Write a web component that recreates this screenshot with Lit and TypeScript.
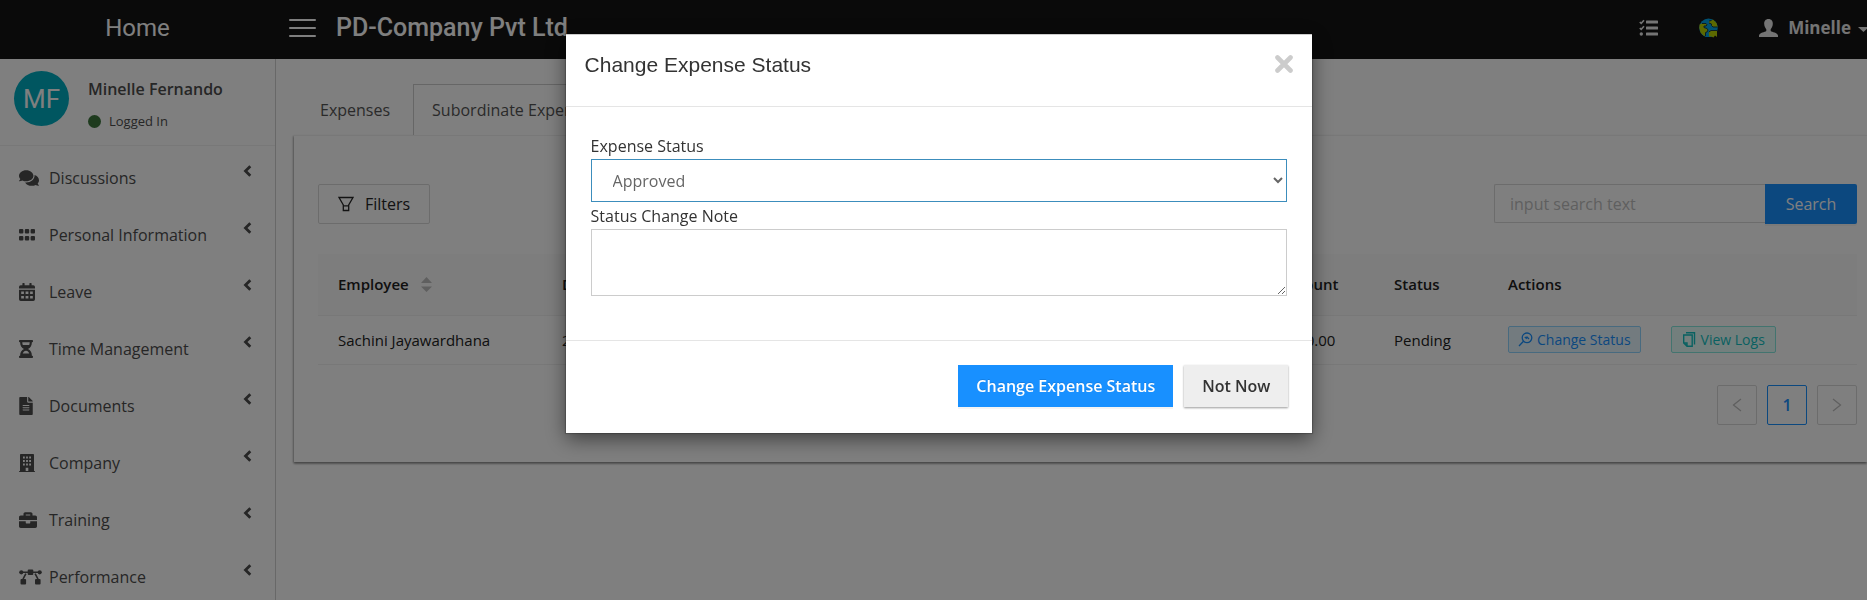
import { LitElement, html, css, svg } from "lit";
import { customElement, state } from "lit/decorators.js";

const icons: Record<string, unknown> = {
  comments: svg`<svg class="icon" width="20" height="18" viewBox="0 0 576 512" aria-hidden="true"><path d="M416 192c0-88.4-93.1-160-208-160S0 103.6 0 192c0 34.3 14.1 65.9 38 92-13.4 30.2-35.5 54.2-35.8 54.5-2.2 2.3-2.8 5.7-1.5 8.7S4.8 352 8 352c36.6 0 66.9-12.3 88.7-25 32.2 15.7 70.3 25 111.3 25 114.9 0 208-71.6 208-160zm122 220c23.9-26 38-57.7 38-92 0-66.9-53.5-124.2-129.3-148.1.9 6.6 1.3 13.3 1.3 20.1 0 105.9-107.7 192-240 192-10.8 0-21.3-.8-31.7-1.9C207.8 439.6 281.8 480 368 480c41 0 79.1-9.2 111.3-25 21.8 12.7 52.1 25 88.7 25 3.2 0 6.1-1.9 7.3-4.8 1.3-2.9.7-6.3-1.5-8.7-.3-.3-22.4-24.2-35.8-54.5z"/></svg>`,
  grid: svg`<svg class="icon" width="16" height="18" viewBox="0 0 16 18" aria-hidden="true"><rect x="0" y="3" width="4.4" height="4.6" rx="1"/><rect x="5.8" y="3" width="4.4" height="4.6" rx="1"/><rect x="11.6" y="3" width="4.4" height="4.6" rx="1"/><rect x="0" y="10" width="4.4" height="4.6" rx="1"/><rect x="5.8" y="10" width="4.4" height="4.6" rx="1"/><rect x="11.6" y="10" width="4.4" height="4.6" rx="1"/></svg>`,
  calendar: svg`<svg class="icon" width="16" height="18" viewBox="0 0 16 18" aria-hidden="true"><path fill-rule="evenodd" d="M3.4.4A.4.4 0 0 1 3.8 0h1.4a.4.4 0 0 1 .4.4V2.2h4.8V.4a.4.4 0 0 1 .4-.4h1.4a.4.4 0 0 1 .4.4V2.2h1.7A1.7 1.7 0 0 1 16 3.9V5.6H0V3.9A1.7 1.7 0 0 1 1.7 2.2H3.4zM0 6.7H16V16.3A1.7 1.7 0 0 1 14.300 18H1.700A1.7 1.7 0 0 1 0 16.300zM2.200 8.400V10.900H4.900V8.400zM6.600 8.400V10.900H9.400V8.400zM11.100 8.400V10.900H13.800V8.400zM2.200 12.900V15.400H4.900V12.900zM6.600 12.900V15.400H9.400V12.900zM11.100 12.900V15.400H13.800V12.900z"/></svg>`,
  hourglass: svg`<svg class="icon" width="14" height="18" viewBox="0 0 14 18" aria-hidden="true"><path fill-rule="evenodd" d="M.8 0H13.200Q14 0 14 .8V1.500Q14 2.300 13.200 2.300H12.900C12.900 5.600 11.400 8.200 9 9C11.400 9.800 12.900 12.400 12.900 15.700H13.200Q14 15.700 14 16.500V17.200Q14 18 13.200 18H.8Q0 18 0 17.200V16.500Q0 15.700 .8 15.700H1.100C1.100 12.400 2.600 9.800 5 9C2.600 8.200 1.100 5.600 1.100 2.300H.8Q0 2.300 0 1.500V.8Q0 0 .8 0zM3.300 2.300C3.300 3.300 3.500 4.200 3.800 5H10.200C10.500 4.200 10.700 3.300 10.700 2.300zM3.700 13.500H10.300C9.700 11.800 8.500 10.700 7 10.700S4.300 11.800 3.700 13.500z"/></svg>`,
  file: svg`<svg class="icon" width="14" height="18" viewBox="0 0 384 512" aria-hidden="true"><path d="M224 136V0H24C10.700 0 0 10.700 0 24v464c0 13.300 10.700 24 24 24h336c13.300 0 24-10.700 24-24V160H248c-13.200 0-24-10.800-24-24zm64 236c0 6.600-5.400 12-12 12H108c-6.600 0-12-5.400-12-12v-8c0-6.600 5.400-12 12-12h168c6.600 0 12 5.400 12 12v8zm0-64c0 6.600-5.400 12-12 12H108c-6.600 0-12-5.400-12-12v-8c0-6.600 5.400-12 12-12h168c6.600 0 12 5.400 12 12v8zm0-72v8c0 6.600-5.400 12-12 12H108c-6.600 0-12-5.400-12-12v-8c0-6.600 5.400-12 12-12h168c6.600 0 12 5.400 12 12zm96-114.100v6.100H256V0h6.100c6.400 0 12.500 2.500 17 7l97.900 98c4.500 4.500 7 10.600 7 16.900z"/></svg>`,
  building: svg`<svg class="icon" width="16" height="18" viewBox="0 0 16 18" aria-hidden="true"><path fill-rule="evenodd" d="M1.800 0H14.200Q15 0 15 .8V16.900H15.400Q16 16.900 16 17.500V18H0V17.500Q0 16.900 .6 16.900H1V.8Q1 0 1.800 0zM4 2.500V4.500H5.800V2.500zM7.100 2.500V4.500H8.900V2.500zM10.200 2.500V4.500H12V2.500zM4 6V8H5.800V6zM7.100 6V8H8.900V6zM10.200 6V8H12V6zM4 9.500V11.500H5.800V9.500zM7.100 9.500V11.500H8.900V9.500zM10.200 9.500V11.500H12V9.500zM6.700 13.700V16.900H9.300V13.700z"/></svg>`,
  briefcase: svg`<svg class="icon" width="18" height="18" viewBox="0 0 512 512" aria-hidden="true"><path d="M320 336c0 8.840-7.160 16-16 16h-96c-8.840 0-16-7.160-16-16v-48H0v144c0 25.600 22.400 48 48 48h416c25.600 0 48-22.400 48-48V288H320v48zm144-208h-80V80c0-25.600-22.400-48-48-48H176c-25.600 0-48 22.400-48 48v48H48c-25.600 0-48 22.400-48 48v80h512v-80c0-25.600-22.400-48-48-48zm-144 0H192V96h128v32z"/></svg>`,
  nodes: svg`<svg class="icon" width="23" height="18" viewBox="0 0 23 18" aria-hidden="true"><circle cx="2.300" cy="4.300" r="2.100"/><circle cx="20.700" cy="4.300" r="2.100"/><path d="M3 3.500H9V5.100H3zM14 3.500H20V5.100H14zM6.200 5.200L7.600 6L4.700 11.500L3.300 10.700zM16.800 5.200L15.400 6L18.300 11.500L19.700 10.700z"/><rect x="8.700" y="1.500" width="5.600" height="5.600" rx="1"/><rect x="1.500" y="11" width="5.600" height="5.600" rx="1"/><rect x="16" y="11" width="5.600" height="5.600" rx="1"/></svg>`,
};

const menu = [
  ["comments", "Discussions"],
  ["grid", "Personal Information"],
  ["calendar", "Leave"],
  ["hourglass", "Time Management"],
  ["file", "Documents"],
  ["building", "Company"],
  ["briefcase", "Training"],
  ["nodes", "Performance"],
];

@customElement("app-header")
export class AppHeader extends LitElement {
  static styles = css`
    :host { display: flex; align-items: center; height: 59px; box-sizing: border-box; padding-bottom: 4px; background: #141414; color: #fff; font-family: Roboto, sans-serif; }
    .home { flex: none; width: 275px; text-align: center; font-size: 24px; line-height: 32px; color: #fff; text-decoration: none; }
    .toggle { flex: none; display: grid; gap: 6px; width: 27px; margin-left: 14px; padding: 0; border: 0; background: none; }
    .bar { height: 2px; border-radius: 1px; background: #fff; }
    .company { flex: 1; margin: 0 0 0 20px; font-size: 25px; line-height: 32px; font-weight: 500; white-space: nowrap; }
    .tools { flex: none; display: flex; align-items: center; color: #e8e8e8; }
    .tool { display: flex; align-items: center; padding: 0; border: 0; background: none; color: inherit; margin-right: 41px; }
    .user { display: flex; align-items: center; gap: 10px; padding: 0; border: 0; background: none; color: inherit; font: 700 17px/24px "Open Sans", sans-serif; white-space: nowrap; }
    .caret { margin: 4px -2px 0 -3px; }
  `;
  render() {
    return html`
      <a class="home" href="#home">Home</a>
      <button class="toggle" aria-label="Toggle menu"><span class="bar"></span><span class="bar"></span><span class="bar"></span></button>
      <h1 class="company">PD-Company Pvt Ltd</h1>
      <nav class="tools">
        <button class="tool" aria-label="Tasks">
          <svg width="19" height="18" viewBox="0 0 19 18"><g fill="currentColor"><rect x="7" y="1.500" width="12" height="3" rx=".6"/><rect x="7" y="7.500" width="12" height="3" rx=".6"/><rect x="7" y="13.500" width="12" height="3" rx=".6"/><circle cx="2.300" cy="15" r="1.700"/></g><path d="M.8 3L2.200 4.400L5 1.200M.8 9L2.200 10.400L5 7.200" fill="none" stroke="currentColor" stroke-width="1.600"/></svg>
        </button>
        <button class="tool" aria-label="Language">
          <svg width="19" height="20" viewBox="0 0 19 20"><circle cx="9.500" cy="9.800" r="9.300" fill="#00a3e6"/><path fill="#b8d200" d="M.5 6.500L3 5.500H7L8 6.800L7 8H5V9.500L8 10.500L9 12L8 14L6.500 14.500V17.500L5 18L1.500 14.500L.3 10zM10 3L12.500 2.500L14 1.500L17.500 5L18.700 9H14L12.500 7.500V6L10 5zM9.800 14L12 12.500H18V19L16 17.500L14.500 19.500L12 18.500H10z"/><path d="M3 5.500H7L8 6.800L7 8H5V9.500L8 10.500L9 12L8 14L6.500 14.500V18M10 3L12.500 2.500M10 5L12.500 6V7.500L14 9H18.700M9.800 14L12 12.500H18" fill="none" stroke="#173a45" stroke-width="1"/></svg>
        </button>
        <button class="user">
          <svg width="19" height="18" viewBox="0 0 19 18" aria-hidden="true"><path fill="currentColor" d="M9.500 0C12.500 0 14 2.200 13.800 5C13.700 7.500 12.600 9 11.700 10.200V12C13 13.200 18.500 13.500 19 16.500V18H0V16.500C.5 13.500 6 13.200 7.300 12V10.200C6.400 9 5.300 7.500 5.200 5C5 2.200 6.500 0 9.500 0z"/></svg>
          Minelle
          <svg class="caret" width="11" height="5" viewBox="0 0 11 5" aria-hidden="true"><path fill="currentColor" d="M0 0H11L5.500 5z"/></svg>
        </button>
      </nav>`;
  }
}

@customElement("app-sidebar")
export class AppSidebar extends LitElement {
  static styles = css`
    :host { display: block; background: #fff; color: #4d4d4d; border-right: 1px solid #d0d0d0; box-sizing: border-box; font-family: "Open Sans", sans-serif; }
    .profile { display: flex; gap: 19px; height: 87px; box-sizing: border-box; padding: 12px 14px; border-bottom: 1px solid #f0f0f0; }
    .avatar { flex: none; width: 55px; height: 55px; border-radius: 50%; background: #00acc1; color: #fff; display: grid; place-items: center; font: 26px/32px Roboto, sans-serif; }
    .who { display: grid; align-content: start; gap: 8px; padding-top: 6px; }
    .name { font-size: 16px; line-height: 24px; font-weight: 600; white-space: nowrap; }
    .state { display: flex; align-items: center; gap: 8px; font-size: 13px; line-height: 24px; }
    .dot { width: 13px; height: 13px; border-radius: 50%; background: #3c763d; }
    .list { list-style: none; margin: 0; padding: 3px 0 0; }
    .entry { display: flex; align-items: center; height: 57px; padding: 0 23px 0 19px; text-decoration: none; color: inherit; font-size: 16px; }
    .glyph { flex: none; width: 30px; display: flex; }
    .icon { flex: none; fill: currentColor; }
    .text { flex: 1; white-space: nowrap; }
    .chevron { align-self: start; margin-top: 16px; }
  `;
  render() {
    return html`
      <div class="profile">
        <div class="avatar">MF</div>
        <div class="who">
          <div class="name">Minelle Fernando</div>
          <div class="state"><span class="dot"></span>Logged In</div>
        </div>
      </div>
      <ul class="list">
        ${menu.map(([icon, label]) => html`<li><a class="entry" href="#${icon}">
          <span class="glyph">${icons[icon]}</span><span class="text">${label}</span>
          <svg class="chevron" width="9" height="12" viewBox="0 0 9 12" aria-hidden="true"><path d="M7.300 1.300L2.500 6L7.300 10.700" fill="none" stroke="currentColor" stroke-width="2.800"/></svg>
        </a></li>`)}
      </ul>`;
  }
}

@customElement("expense-panel")
export class ExpensePanel extends LitElement {
  static styles = css`
    :host { display: block; min-width: 0; padding: 25px 0 0 18px; color: #212121; font-family: "Open Sans", sans-serif; }
    button, input { font-family: inherit; }
    .tabs { display: flex; height: 51px; }
    .tab { padding: 0 18px; border: 1px solid transparent; border-bottom: 0; background: none; color: #555; font-size: 16px; line-height: 24px; }
    .tab.first { padding: 0 22px 0 25px; }
    .tab.active { border-color: #ccc; background: #fff; }
    .card { border-top: 1px solid #f0f0f0; padding: 48px 10px 37px 24px; background: #fff; box-shadow: 0 2px 2px rgba(0, 0, 0, .3), -1px 1px 2px rgba(0, 0, 0, .25); }
    .bar { display: flex; justify-content: space-between; }
    .filters { display: flex; align-items: center; gap: 11px; height: 40px; padding: 0 19px; border: 1px solid #d9d9d9; border-radius: 2px; background: #fff; color: #262626; font-size: 16px; }
    .search { display: flex; }
    .field { width: 271px; height: 39px; box-sizing: border-box; padding: 0 15px; border: 1px solid #d9d9d9; border-right: 0; border-radius: 2px 0 0 2px; font-size: 16px; background: #fff; }
    .field::placeholder { color: #bfbfbf; opacity: 1; }
    .go { width: 92px; height: 40px; padding: 0; border: 0; border-radius: 0 2px 2px 0; background: #1890ff; color: #fff; font-size: 16px; box-shadow: 0 2px 0 rgba(0, 0, 0, .045); }
    .table { width: 100%; margin-top: 30px; border-collapse: collapse; table-layout: fixed; text-align: left; font-size: 15px; line-height: 24px; }
    .table th { height: 61px; padding: 0 20px; background: #fafafa; border-bottom: 1px solid #f0f0f0; font-weight: 600; font-size: 15px; box-sizing: border-box; }
    .table td { height: 49px; padding: 0 20px; border-bottom: 1px solid #f0f0f0; box-sizing: border-box; }
    .who { width: 224px; } .sum { width: 114px; } .state { width: 114px; } .acts { width: 369px; }
    .sort { display: flex; align-items: center; gap: 12px; }
    .actions { display: flex; gap: 30px; }
    .tag { display: flex; align-items: center; gap: 4px; height: 27px; box-sizing: border-box; padding: 0 9px; border: 1px solid; border-radius: 2px; font-size: 14px; }
    .tag.blue { color: #1890ff; background: #e6f7ff; border-color: #91d5ff; }
    .tag.cyan { color: #13c2c2; background: #e6fffb; border-color: #87e8de; padding: 0 10px; }
    .pages { display: flex; justify-content: flex-end; gap: 10px; margin-top: 20px; }
    .page { display: grid; place-items: center; width: 40px; height: 40px; padding: 0; border: 1px solid #d9d9d9; border-radius: 2px; background: #fff; color: #bfbfbf; font-size: 16px; font-weight: 600; }
    .page.on { border-color: #1890ff; color: #1890ff; }
  `;
  render() {
    return html`
      <div class="tabs" role="tablist">
        <button class="tab first" role="tab" aria-selected="false">Expenses</button>
        <button class="tab active" role="tab" aria-selected="true">Subordinate Expenses</button>
      </div>
      <section class="card">
        <div class="bar">
          <button class="filters">
            <svg width="16" height="16" viewBox="0 0 16 16" fill="none" stroke="currentColor" stroke-width="1.300" aria-hidden="true"><path d="M1 1.500H15L10.700 9V14.500H5.300V9zM5.300 9.800H10.700"/></svg>Filters
          </button>
          <form class="search" @submit=${(e: Event) => e.preventDefault()}>
            <input class="field" type="search" aria-label="Search expenses" placeholder="input search text" />
            <button class="go">Search</button>
          </form>
        </div>
        <table class="table">
          <thead><tr>
            <th class="who"><span class="sort">Employee <svg width="11" height="15" viewBox="0 0 11 15" fill="#bfbfbf" aria-hidden="true"><path d="M0 6L5.500 0L11 6zM0 9.500H11L5.500 15z"/></svg></span></th>
            <th>Date</th><th class="sum">Amount</th><th class="state">Status</th><th class="acts">Actions</th>
          </tr></thead>
          <tbody><tr>
            <td>Sachini Jayawardhana</td><td>2022-05-10</td><td>2500.00</td><td>Pending</td>
            <td><div class="actions">
              <button class="tag blue"><svg width="15" height="15" viewBox="0 0 15 15" fill="none" stroke="currentColor" stroke-width="1.300" aria-hidden="true"><circle cx="9" cy="5.800" r="4.800"/><path d="M5.500 9.300L1 14M6.800 5L8.300 6.300L9 5L11 7"/></svg>Change Status</button>
              <button class="tag cyan"><svg width="15" height="15" viewBox="0 0 15 15" fill="none" stroke="currentColor" stroke-width="1.400" aria-hidden="true"><path d="M4 .8H12.500V12.500M1.700 3H10.200V14.300H5L1.700 11zM1.700 11H5V14.300"/></svg>View Logs</button>
            </div></td>
          </tr></tbody>
        </table>
        <nav class="pages" aria-label="Pages">
          <button class="page" aria-label="Previous"><svg width="10" height="14" viewBox="0 0 10 14" fill="none" stroke="currentColor" stroke-width="1.300"><path d="M9 1L1.500 7L9 13"/></svg></button>
          <button class="page on">1</button>
          <button class="page" aria-label="Next"><svg width="10" height="14" viewBox="0 0 10 14" fill="none" stroke="currentColor" stroke-width="1.300"><path d="M1 1L8.500 7L1 13"/></svg></button>
        </nav>
      </section>`;
  }
}

@customElement("status-dialog")
export class StatusDialog extends LitElement {
  static styles = css`
    :host { position: fixed; inset: 0; display: flex; justify-content: center; align-items: flex-start; padding: 34px 0 0 11px; background: rgba(0, 0, 0, .5); font-family: "Open Sans", sans-serif; color: #333; }
    .dialog { width: 40vw; min-width: 480px; box-sizing: border-box; background: #fff; border-top: 1px solid #ccc; box-shadow: 0 6px 19px rgba(0, 0, 0, .5), 0 0 1px 1px rgba(0, 0, 0, .2); }
    .head { display: flex; justify-content: space-between; align-items: flex-start; height: 72px; box-sizing: border-box; padding: 17px 19px 0; border-bottom: 1px solid #e5e5e5; }
    .title { margin: 0; font: 400 21px/26px "Liberation Sans", sans-serif; }
    .close { display: flex; margin-top: 3px; padding: 0; border: 0; background: none; color: #ccc; }
    .body { display: grid; padding: 26px 25px 44px; border-bottom: 1px solid #e5e5e5; }
    .label { font-size: 16px; line-height: 26px; }
    .select, .note { width: 100%; box-sizing: border-box; font: 400 16px/24px "Open Sans", sans-serif; background: #fff; border: 1px solid #ccc; border-radius: 0; margin: 0; }
    .select { height: 43px; padding: 0 17px; color: #666; border-color: #3c8dbc; margin-bottom: 1px; }
    .note { height: 67px; resize: vertical; padding: 6px 20px; }
    .foot { display: flex; justify-content: flex-end; gap: 11px; padding: 24px 24px 26px; }
    .primary, .plain { height: 42px; padding: 0 18px; border: 0; font: 600 16px/24px "Open Sans", sans-serif; white-space: nowrap; }
    .primary { background: #1890ff; color: #fff; box-shadow: 0 2px 0 rgba(0, 0, 0, .045); text-shadow: 0 -1px 0 rgba(0, 0, 0, .12); }
    .plain { background: #eee; color: #333; box-shadow: 0 1px 2px rgba(0, 0, 0, .4); }
  `;
  @state() private status = "Approved";
  render() {
    return html`
      <div class="dialog" role="dialog" aria-labelledby="title">
        <header class="head">
          <h2 class="title" id="title">Change Expense Status</h2>
          <button class="close" aria-label="Close"><svg width="18" height="18" viewBox="0 0 18 18"><path d="M2.500 2.500L15.500 15.500M15.500 2.500L2.500 15.500" stroke="currentColor" stroke-width="4.600" stroke-linecap="round"/></svg></button>
        </header>
        <div class="body">
          <label class="label" for="status">Expense Status</label>
          <select class="select" id="status" @change=${(e: Event) => (this.status = (e.target as HTMLSelectElement).value)}>
            ${["Approved", "Pending", "Rejected"].map((s) => html`<option ?selected=${s === this.status}>${s}</option>`)}
          </select>
          <label class="label" for="note">Status Change Note</label>
          <textarea class="note" id="note"></textarea>
        </div>
        <footer class="foot">
          <button class="primary">Change Expense Status</button>
          <button class="plain">Not Now</button>
        </footer>
      </div>`;
  }
}

@customElement("app-root")
export class AppRoot extends LitElement {
  static styles = css`
    :host { display: block; min-height: 100vh; background: #fff; }
    .frame { height: 100vh; overflow: hidden; display: grid; grid-template: auto 1fr / 276px 1fr; }
    .top { grid-column: 1 / -1; }
  `;
  render() {
    return html`
      <div class="frame">
        <app-header class="top"></app-header>
        <app-sidebar></app-sidebar>
        <expense-panel></expense-panel>
      </div>
      <status-dialog></status-dialog>`;
  }
}
